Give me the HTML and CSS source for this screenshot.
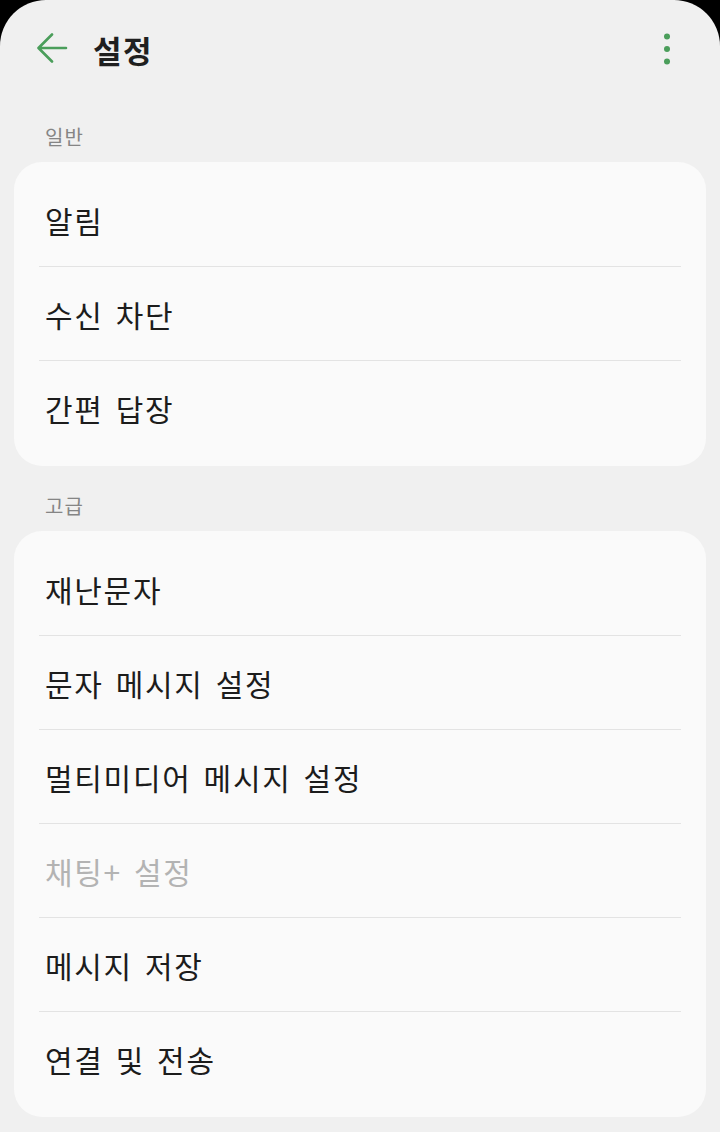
FILE: index.html
```html
<!DOCTYPE html>
<html lang="ko">

<head>
    <title>설정</title>
    <meta charset="UTF-8">
    <meta name="viewport" content="width=device-width, initial-scale=1">
    <link rel="stylesheet" href="styles.css">
</head>

<body>
    <div class="screen">
        <div class="header">
            <svg class="back" width="32" height="32" viewBox="0 0 32 32">
                <path d="M30 15H3M16 1.5L2.5 15L16 28.5" fill="none" stroke="#4b9e5b" stroke-width="2.6" stroke-linecap="round" stroke-linejoin="round"/>
            </svg>
            <div class="title">설정</div>
            <svg class="more" width="8" height="32" viewBox="0 0 8 32">
                <circle cx="4" cy="3.5" r="3" fill="#4b9e5b"/>
                <circle cx="4" cy="16" r="3" fill="#4b9e5b"/>
                <circle cx="4" cy="28.5" r="3" fill="#4b9e5b"/>
            </svg>
        </div>

        <div class="label">일반</div>
        <div class="card">
            <div class="row">알림</div>
            <div class="row">수신 차단</div>
            <div class="row">간편 답장</div>
        </div>

        <div class="label second">고급</div>
        <div class="card">
            <div class="row">재난문자</div>
            <div class="row">문자 메시지 설정</div>
            <div class="row">멀티미디어 메시지 설정</div>
            <div class="row disabled">채팅+ 설정</div>
            <div class="row">메시지 저장</div>
            <div class="row">연결 및 전송</div>
        </div>
    </div>
</body>

</html>
```

FILE: styles.css
```css
* {
    margin: 0;
    padding: 0;
    box-sizing: border-box;
}

body {
    background: #000;
    font-family: "Noto Sans CJK KR", "Noto Sans", sans-serif;
}

.screen {
    min-height: 1132px;
    background: #f0f0f0;
    border-radius: 46px 46px 0 0;
    overflow: hidden;
}

.header {
    height: 98px;
    display: flex;
    align-items: center;
    padding: 0 49px 0 36px;
}

.back {
    flex: none;
}

.title {
    flex: 1;
    margin-left: 25px;
    font-size: 31px;
    font-weight: 700;
    color: #1f1f1f;
    letter-spacing: 1.5px;
}

.more {
    flex: none;
}

.label {
    padding: 26px 45px 12px;
    font-size: 20px;
    line-height: 26px;
    color: #858585;
    letter-spacing: 1px;
}

.label.second {
    padding-top: 27px;
}

.card {
    margin: 0 14px;
    padding: 10px 0 12px;
    background: #fafafa;
    border-radius: 28px;
}

.row {
    height: 94px;
    margin: 0 25px;
    padding-left: 6px;
    display: flex;
    align-items: center;
    padding-top: 1px;
    font-size: 30px;
    color: #1c1c1c;
    letter-spacing: 1.7px;
    word-spacing: 2px;
    border-top: 1px solid #e3e3e3;
}

.row:first-child {
    border-top: none;
}

.row.disabled {
    color: #b3b3b3;
}
```
